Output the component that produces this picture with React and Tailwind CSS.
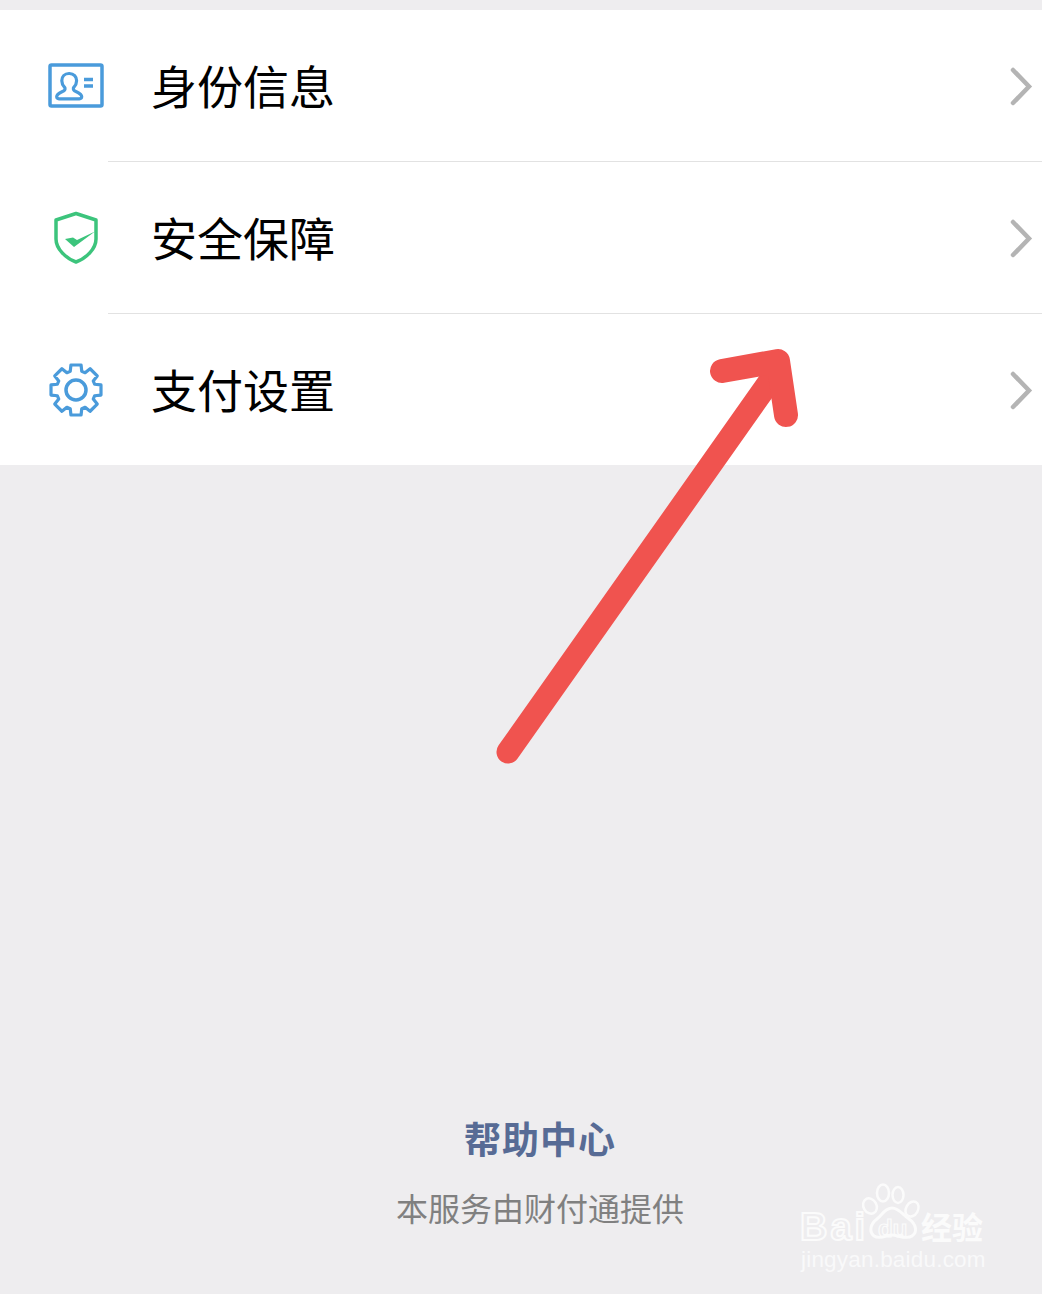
import React from "react";

function Chevron() {
  return (
    <svg width="24" height="40" viewBox="0 0 24 40" fill="none" className="mt-[2px] shrink-0">
      <path d="M4 3 L20 19.500 L4 36" stroke="#b4b4b4" strokeWidth="4.500" strokeLinecap="round" />
    </svg>
  );
}

function IdIcon() {
  return (
    <svg width="56" height="46" viewBox="0 0 56 46" fill="none">
      <rect x="2" y="2" width="52" height="41" rx="1.500" stroke="#4a9bdb" strokeWidth="3.500" />
      <path d="M21 10.500c-4.400 0-7.200 3.200-7.200 7.200 0 3 1.300 5 2.800 6.600.7.900.6 2.600-.5 3.300-2.200 1.400-7.400 2.700-7.400 6 0 1.400.9 2.200 2.300 2.200h20.400c1.400 0 2.300-.8 2.300-2.200 0-3.300-5.200-4.600-7.400-6-1.100-.7-1.200-2.400-.5-3.300 1.500-1.600 2.800-3.600 2.800-6.600 0-4-2.800-7.200-7.200-7.200z" stroke="#4a9bdb" strokeWidth="3.200" strokeLinejoin="round" />
      <path d="M36 16.500h9M36 23h9" stroke="#4a9bdb" strokeWidth="3.500" />
    </svg>
  );
}

function ShieldIcon() {
  return (
    <svg width="46" height="54" viewBox="0 0 46 54" fill="none">
      <path d="M23 2.500 L43 9 V28 C43 38 33 47.500 23 51 C13 47.500 3 38 3 28 V9 Z" stroke="#3cc47c" strokeWidth="3.500" strokeLinejoin="round" />
      <path d="M12 28 L20 26.500 L24 29 L42 20.500 L21 36 Z" fill="#3cc47c" />
    </svg>
  );
}

function GearIcon() {
  const teeth = 8;
  let d = "";
  for (let i = 0; i < teeth; i++) {
    const a = (i * 2 * Math.PI) / teeth - Math.PI / 2;
    const pts = [
      [19.500, a - 0.3],
      [25.500, a - 0.2],
      [25.500, a + 0.2],
      [19.500, a + 0.3],
    ];
    pts.forEach(([rad, t], j) => {
      const x = (28 + rad * Math.cos(t)).toFixed(2);
      const y = (28 + rad * Math.sin(t)).toFixed(2);
      d += (i === 0 && j === 0 ? "M" : "L") + x + " " + y + " ";
    });
  }
  d += "Z";
  return (
    <svg width="56" height="56" viewBox="0 0 56 56" fill="none">
      <path d={d} stroke="#4a9bdb" strokeWidth="3.200" strokeLinejoin="round" />
      <circle cx="28" cy="28" r="10" stroke="#4a9bdb" strokeWidth="3.500" />
    </svg>
  );
}

function Row({ icon, label, divider, last }) {
  return (
    <div className={last ? "relative flex h-[151px] items-center bg-white" : "relative flex h-[152px] items-center bg-white"}>
      <div className="flex w-[152px] shrink-0 items-center justify-center">
        <div className="flex w-[56px] items-center justify-center">{icon}</div>
      </div>
      <span className="-ml-[1px] flex-1 pb-[4px] text-[46px] leading-none text-black">{label}</span>
      <div className="pr-[9px]"><Chevron /></div>
      {divider && <div className="absolute bottom-0 left-[108px] right-0 h-px bg-[#e2e2e2]" />}
    </div>
  );
}

function Arrow() {
  return (
    <svg className="absolute left-0 top-0" width="1042" height="800" viewBox="0 0 1042 800" fill="none">
      <path d="M508 752 L772 378" stroke="#f0534f" strokeWidth="23" strokeLinecap="round" />
      <path d="M722 371 L778 361 L786 415" stroke="#f0534f" strokeWidth="24" strokeLinecap="round" strokeLinejoin="round" />
    </svg>
  );
}

function Watermark() {
  return (
    <div className="absolute left-[800px] top-[1182px] h-[92px] w-[190px]">
      <svg className="absolute left-[60px] top-0" width="64" height="62" viewBox="0 0 64 62" fill="none" stroke="#fbfbfb" strokeWidth="2.500">
        <ellipse cx="23" cy="11" rx="6" ry="8.500" />
        <ellipse cx="38" cy="13" rx="5.500" ry="8" />
        <ellipse cx="10" cy="24" rx="6.500" ry="8" transform="rotate(-30 10 24)" />
        <ellipse cx="52" cy="27" rx="6" ry="8" transform="rotate(30 52 27)" />
        <path d="M32 26 C25 26 22 33 17 37 C10 42 9 50 14 54 C20 58 27 53 32 53 C38 53 46 58 52 54 C58 50 56 42 49 37 C43 33 39 26 32 26 Z" strokeWidth="3" />
      </svg>
      <span className="absolute left-0 top-[26px] font-['Liberation_Sans',sans-serif] text-[38px] font-bold leading-none tracking-[3px] text-transparent [-webkit-text-stroke:2px_#fbfbfb]">Bai</span>
      <span className="absolute left-[78px] top-[35px] font-['Liberation_Sans',sans-serif] text-[24px] font-bold leading-none text-transparent [-webkit-text-stroke:1.200px_#fbfbfb]">du</span>
      <span className="absolute left-[121px] top-[28px] font-['Noto_Sans_CJK_SC',sans-serif] text-[31px] font-bold leading-none text-[#fbfbfb]">经验</span>
      <span className="absolute left-[1px] top-[67px] whitespace-nowrap font-['Liberation_Sans',sans-serif] text-[22.500px] leading-none tracking-[0.2px] text-[#f9f9fa]">jingyan.baidu.com</span>
    </div>
  );
}

export default function App() {
  return (
    <div className="relative flex h-[1294px] w-[1042px] flex-col overflow-hidden bg-[#eeedef] font-['Noto_Sans_CJK_SC',sans-serif]">
      <div className="h-[10px] shrink-0" />
      <Row icon={<IdIcon />} label="身份信息" divider />
      <Row icon={<ShieldIcon />} label="安全保障" divider />
      <Row icon={<GearIcon />} label="支付设置" last />
      <div className="flex flex-1 flex-col items-center justify-end pb-[71px] pl-[38px]">
        <div className="text-[37px] font-bold leading-none tracking-[1px] text-[#576b95]">帮助中心</div>
        <div className="mt-[34px] text-[32px] leading-none text-[#808080]">本服务由财付通提供</div>
      </div>
      <Arrow />
      <Watermark />
    </div>
  );
}
